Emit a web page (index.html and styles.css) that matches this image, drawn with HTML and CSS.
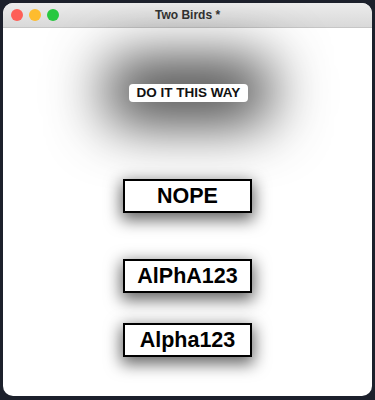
FILE: index.html
```html
<!DOCTYPE html>
<html>
<head>
<meta charset="utf-8">
<link rel="stylesheet" href="styles.css">
</head>
<body>
<div class="window">
  <div class="titlebar">
    <div class="lights">
      <span class="light red"></span>
      <span class="light yellow"></span>
      <span class="light green"></span>
    </div>
    <div class="title">Two Birds *</div>
    <div></div>
  </div>
  <div class="content">
    <div class="glow-btn">DO IT THIS WAY</div>
    <div class="box box-nope">NOPE</div>
    <div class="box box-upper">AlPhA123</div>
    <div class="box box-lower">Alpha123</div>
  </div>
</div>
</body>
</html>
```
FILE: styles.css
```css
html, body {
  margin: 0;
  padding: 0;
}
body {
  width: 375px;
  height: 400px;
  background: #1c202b;
  font-family: "Liberation Sans", Arial, sans-serif;
  overflow: hidden;
}
.window {
  margin: 3px 0 0 3px;
  width: 369px;
  height: 393px;
  border-radius: 10px;
  overflow: hidden;
  background: #fff;
  display: flex;
  flex-direction: column;
}
.titlebar {
  height: 24px;
  flex: none;
  background: linear-gradient(#ececec, #d9d9d9);
  border-bottom: 1px solid #c6c6c6;
  display: grid;
  grid-template-columns: 1fr auto 1fr;
  align-items: center;
}
.lights {
  display: flex;
  gap: 6px;
  padding-left: 8px;
}
.light {
  width: 12px;
  height: 12px;
  border-radius: 50%;
  display: block;
}
.red { background: #fe5f57; }
.yellow { background: #febc2e; }
.green { background: #28c840; }
.title {
  font-size: 12px;
  font-weight: bold;
  color: #333;
}
.content {
  flex: 1;
  display: flex;
  flex-direction: column;
  align-items: center;
  padding-top: 56px;
}
.glow-btn {
  width: 119px;
  height: 18px;
  margin-left: 2px;
  border-radius: 4px;
  background: #fff;
  color: #111;
  font-size: 13.5px;
  font-weight: bold;
  line-height: 18px;
  text-align: center;
  box-shadow: 0 -2px 58px 22px rgba(0, 0, 0, 0.78);
}
.box {
  box-sizing: border-box;
  width: 129px;
  height: 34px;
  border: 2px solid #000;
  background: #fff;
  color: #000;
  font-size: 21.5px;
  font-weight: bold;
  line-height: 30px;
  text-align: center;
  box-shadow: 0 5px 16px 2px rgba(0, 0, 0, 0.6);
}
.box-nope { margin-top: 77px; }
.box-upper { margin-top: 46px; }
.box-lower { margin-top: 30px; }
```
